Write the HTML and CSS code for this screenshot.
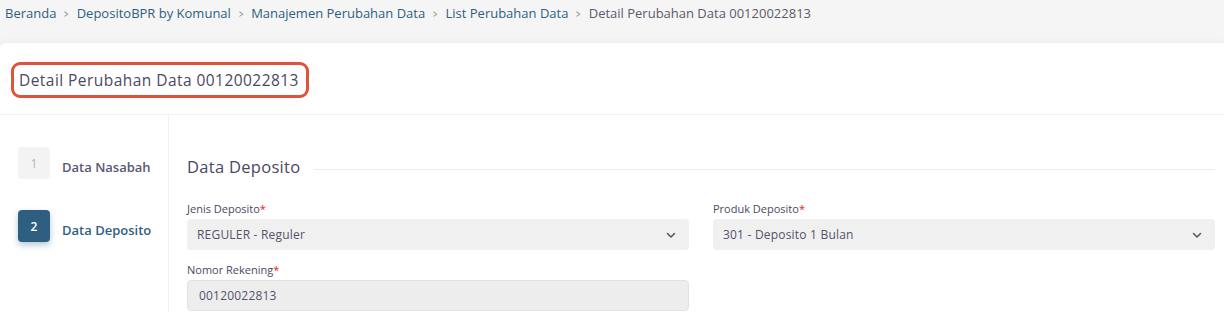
FILE: index.html
```html
<!DOCTYPE html>
<html lang="id">
<head>
<meta charset="utf-8">
<title>Detail Perubahan Data</title>
<link rel="stylesheet" href="styles.css">
</head>
<body>
<nav class="breadcrumb">
  <a class="crumb">Beranda</a><span class="sep">&gt;</span>
  <a class="crumb">DepositoBPR by Komunal</a><span class="sep">&gt;</span>
  <a class="crumb">Manajemen Perubahan Data</a><span class="sep">&gt;</span>
  <a class="crumb">List Perubahan Data</a><span class="sep">&gt;</span>
  <span class="crumb current">Detail Perubahan Data 00120022813</span>
</nav>
<main class="card">
  <header class="card-head">
    <h1 class="title">Detail Perubahan Data 00120022813</h1>
  </header>
  <div class="card-body">
    <aside class="steps">
      <div class="step">
        <span class="step-num">1</span>
        <span class="step-label">Data Nasabah</span>
      </div>
      <div class="step active">
        <span class="step-num">2</span>
        <span class="step-label">Data Deposito</span>
      </div>
    </aside>
    <section class="content">
      <div class="section-title">
        <h2>Data Deposito</h2>
        <span class="rule"></span>
      </div>
      <div class="grid">
        <div class="field">
          <label>Jenis Deposito<span class="req">*</span></label>
          <div class="select">
            <span>REGULER - Reguler</span>
            <svg class="chev" width="12" height="12" viewBox="0 0 12 12"><path d="M2.5 4.5 6 8l3.5-3.5" fill="none" stroke="#555" stroke-width="1.5" stroke-linecap="round" stroke-linejoin="round"/></svg>
          </div>
        </div>
        <div class="field">
          <label>Produk Deposito<span class="req">*</span></label>
          <div class="select">
            <span>301 - Deposito 1 Bulan</span>
            <svg class="chev" width="12" height="12" viewBox="0 0 12 12"><path d="M2.5 4.5 6 8l3.5-3.5" fill="none" stroke="#555" stroke-width="1.5" stroke-linecap="round" stroke-linejoin="round"/></svg>
          </div>
        </div>
        <div class="field">
          <label>Nomor Rekening<span class="req">*</span></label>
          <div class="input">00120022813</div>
        </div>
      </div>
    </section>
  </div>
</main>
</body>
</html>
```
FILE: styles.css
```css
* { box-sizing: border-box; }
html, body { margin: 0; padding: 0; }
body {
  background: #f5f5f5;
  font-family: "Open Sans", "Noto Sans", sans-serif;
  color: #4b4862;
  overflow: hidden;
  height: 312px;
}
.breadcrumb {
  display: flex;
  align-items: center;
  height: 26px;
  padding: 0 0 0 5px;
  font-size: 13px;
  white-space: nowrap;
}
.crumb { color: #2f5f80; }
.crumb.current { color: #5c5a6b; }
.sep { color: #777; margin: 0 7px; font-size: 11px; transform: scaleX(0.7); }
.card {
  margin-top: 17px;
  background: #fff;
  border-radius: 6px 0 0 0;
  box-shadow: 0 0 8px rgba(0,0,0,0.06);
  height: 269px;
  display: flex;
  flex-direction: column;
}
.card-head {
  height: 72px;
  flex: none;
  padding: 19px 0 0 11px;
  border-bottom: 1px solid #f1f1f1;
}
.title {
  display: inline-block;
  margin: 0;
  height: 36px;
  line-height: 30px;
  padding: 0 7px 0 5px;
  border: 3px solid #e0523e;
  border-radius: 9px;
  font-size: 15.5px;
  letter-spacing: 0.45px;
  font-weight: 500;
  color: #4b4862;
}
.card-body { display: flex; flex: 1; }
.steps {
  width: 169px;
  flex: none;
  border-right: 1px solid #f1f1f1;
  padding: 32px 0 0 18px;
  display: flex;
  flex-direction: column;
  gap: 31px;
}
.step { display: flex; align-items: center; gap: 12px; }
.step-num {
  width: 32px; height: 32px;
  border-radius: 4px;
  background: #f3f3f4;
  color: #b5b5bd;
  font-size: 12px;
  display: flex; align-items: center; justify-content: center;
}
.step-label { font-size: 13px; font-weight: 600; color: #5a5770; padding-top: 7px; }
.step.active .step-num {
  background: #2f5f80;
  color: #fff;
  font-weight: 600;
  box-shadow: 0 3px 6px rgba(47,95,128,0.35);
}
.step.active .step-label { color: #2f5f80; }
.content { flex: 1; padding: 40px 9px 0 18px; }
.section-title { display: flex; align-items: center; gap: 14px; }
.section-title h2 { margin: 0; font-size: 16.5px; letter-spacing: 0.3px; font-weight: 500; color: #4b4862; }
.rule { flex: 1; height: 1px; background: #ececec; margin-top: 6px; }
.grid {
  display: grid;
  grid-template-columns: 1fr 1fr;
  column-gap: 24px;
  row-gap: 13px;
  margin-top: 24px;
}
.field label { display: block; font-size: 11px; color: #4b4862; margin-bottom: 3px; line-height: 14px; }
.req { color: #e02424; }
.select, .input {
  height: 31px;
  border-radius: 4px;
  background: #f0f0f0;
  display: flex; align-items: center; justify-content: space-between;
  padding: 0 12px 0 10px;
  font-size: 12px;
  letter-spacing: 0.2px;
  color: #55526a;
}
.input { background: #ededed; border: 1px solid #e2e2e2; padding-left: 11px; }
```
